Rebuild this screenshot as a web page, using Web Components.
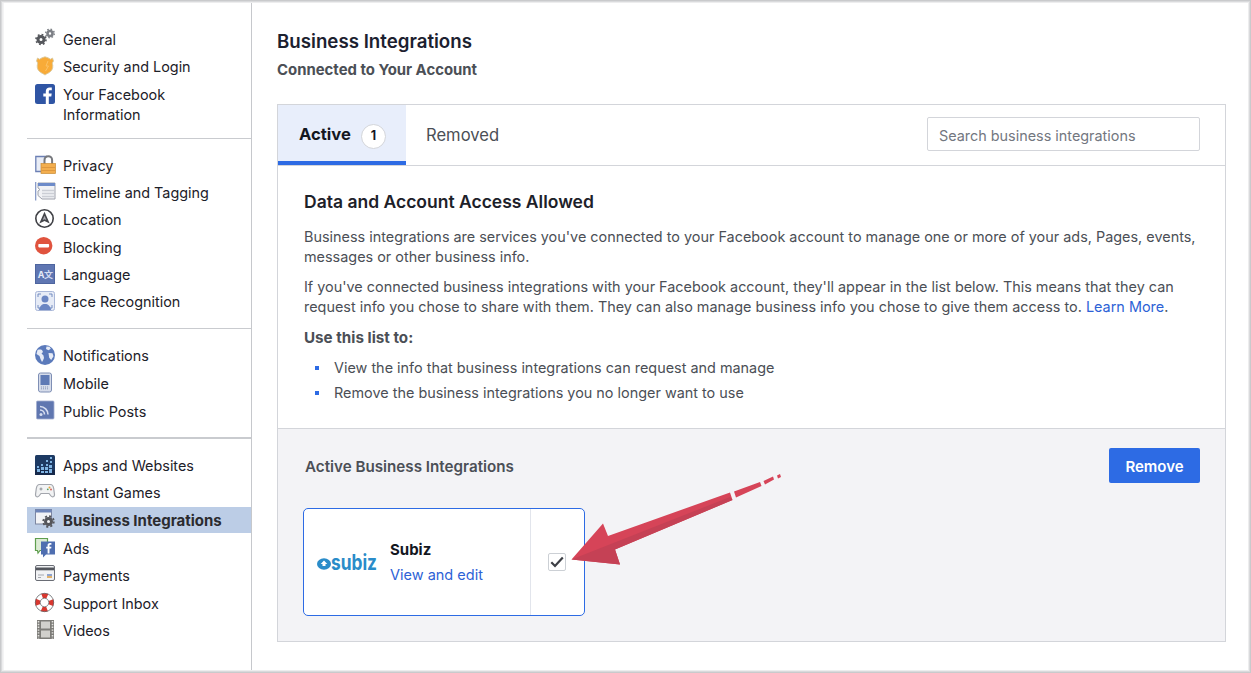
<!DOCTYPE html>
<html>
<head>
<meta charset="utf-8">
<title>Business Integrations</title>
<style>
html, body { margin: 0; padding: 0; background: #fff; }
body { font: 14.4px/20px Inter, "Liberation Sans", sans-serif; color: #1d2129; }
</style>
</head>
<body>
<fb-settings>
    <fb-sidebar slot="side">
        <fb-nav-group style="--row:27.4px; --pb:13.2px">
            <fb-nav-item icon="gears">General</fb-nav-item>
            <fb-nav-item icon="badge">Security and Login</fb-nav-item>
            <fb-nav-item icon="fb">Your Facebook Information</fb-nav-item>
        </fb-nav-group>
        <fb-nav-group style="--row:27.2px; --pb:11.8px">
            <fb-nav-item icon="lock">Privacy</fb-nav-item>
            <fb-nav-item icon="timeline">Timeline and Tagging</fb-nav-item>
            <fb-nav-item icon="location">Location</fb-nav-item>
            <fb-nav-item icon="block">Blocking</fb-nav-item>
            <fb-nav-item icon="language">Language</fb-nav-item>
            <fb-nav-item icon="face">Face Recognition</fb-nav-item>
        </fb-nav-group>
        <fb-nav-group style="--row:28px; --pb:10px; --line:2px">
            <fb-nav-item icon="globe">Notifications</fb-nav-item>
            <fb-nav-item icon="mobile">Mobile</fb-nav-item>
            <fb-nav-item icon="rss">Public Posts</fb-nav-item>
        </fb-nav-group>
        <fb-nav-group last style="--row:27.5px">
            <fb-nav-item icon="apps">Apps and Websites</fb-nav-item>
            <fb-nav-item icon="pad">Instant Games</fb-nav-item>
            <fb-nav-item icon="bizgear" active>Business Integrations</fb-nav-item>
            <fb-nav-item icon="ads">Ads</fb-nav-item>
            <fb-nav-item icon="card">Payments</fb-nav-item>
            <fb-nav-item icon="buoy">Support Inbox</fb-nav-item>
            <fb-nav-item icon="film">Videos</fb-nav-item>
        </fb-nav-group>
    </fb-sidebar>

    <fb-page-title title="Business Integrations" sub="Connected to Your Account"></fb-page-title>

    <fb-panel>
        <fb-tabs slot="tabs" placeholder="Search business integrations"></fb-tabs>
        <fb-info slot="info">
            <h3 slot="title">Data and Account Access Allowed</h3>
        </fb-info>
        <fb-active-list slot="list" title="Active Business Integrations">
            <fb-biz-card name="Subiz" link="View and edit"></fb-biz-card>
        </fb-active-list>
    </fb-panel>

    <fb-arrow slot="over"></fb-arrow>
</fb-settings>

<script>
const ICONS = {
    gears: `<g fill="none"><circle cx="6" cy="10.500" r="3" stroke="#55575c" stroke-width="3"/><circle cx="6" cy="10.500" r="5" stroke="#55575c" stroke-width="1.600" stroke-dasharray="1.800 2.120"/><circle cx="15" cy="4.500" r="2.500" stroke="#7d8086" stroke-width="2.600"/><circle cx="15" cy="4.500" r="4.300" stroke="#7d8086" stroke-width="1.400" stroke-dasharray="1.600 1.780"/></g>`,
    badge: `<path d="M2.500 2l2 1.200L7 1.800l3-1 3 1 2.500 1.400 2-1.200 1 3-1.200 2c1 3.500.5 6-1.300 8-1.800 2-4 2.500-6 4-2-1.500-4.200-2-6-4-1.800-2-2.300-4.500-1.300-8L1.500 5z" fill="#f8ab38" stroke="#d9c9a0" stroke-width=".9"/><path d="M13 5l-2 5h2.500l-3 5" fill="none" stroke="#fcc266" stroke-width="1"/>`,
    fb: `<rect width="20" height="20" rx="2.500" fill="#2f55a4"/><path d="M13.800 20v-7.500h2.500l.4-3h-2.900V7.600c0-.9.3-1.400 1.500-1.400h1.500V3.500c-.3 0-1.200-.1-2.200-.1-2.200 0-3.800 1.300-3.800 3.800v2.300H8.300v3h2.500V20z" fill="#fff"/>`,
    lock: `<path d="M12 1.500H.8v15H6" fill="#e9edf6" stroke="#6c80b5" stroke-width="1.300"/><path d="M9.500 9V5a3.800 3.800 0 0 1 7.600 0v4" fill="none" stroke="#77797e" stroke-width="2"/><rect x="6" y="8.500" width="14.500" height="10" fill="#f3ae4e" stroke="#c98c36" stroke-width=".7"/><path d="M6.500 12.500h13.500M6.500 15.500h13.500" stroke="#d8923a" stroke-width=".8"/>`,
    timeline: `<path d="M.7 0v18.500" stroke="#7f93c2" stroke-width="1.200" fill="none"/><path d="M3 1h17v16H7l-4-3.500V9l2-1.500-2-1.500z" fill="#f1f2f5" stroke="#9ea2ac"/><rect x="3" y="1" width="17" height="3" fill="#6d8bc9"/><path d="M7 8.500h12M7 11.500h12M7 14.500h12" stroke="#cbced5" stroke-width="1.500"/>`,
    location: `<circle cx="9.500" cy="9.500" r="8.700" fill="#fff" stroke="#3f4045" stroke-width="1.600"/><path d="M9.500 2.800l5.200 11.700-5.200-2.600-5.200 2.600z" fill="#44454a"/><path d="M9.500 6.800l1.900 4.200-1.900-.8-1.900.8z" fill="#a9aab0"/>`,
    block: `<circle cx="8.700" cy="8.700" r="8.700" fill="#e0533e"/><rect x="3.300" y="7" width="10.800" height="3.400" rx=".8" fill="#fff"/>`,
    language: `<rect x=".5" y=".5" width="19" height="19" fill="#5f76b2" stroke="#4e659f"/><text x="2.800" y="14" font-size="9" font-weight="700" fill="#e6ebf8" font-family="Inter, sans-serif">A</text><text x="9" y="14" font-size="9" font-weight="700" fill="#d3dcf2" font-family="'Noto Sans CJK SC', sans-serif">文</text>`,
    face: `<rect x=".5" y=".5" width="19" height="19" rx="2" fill="#e6ebf6" stroke="#a9b7d8"/><path d="M3 6V3h3M14 3h3v3M3 14v3h3M14 17h3v-3" fill="none" stroke="#6a83bb" stroke-width=".9"/><circle cx="10" cy="8" r="3.500" fill="#6b86c3"/><path d="M4 19c.4-4 3.300-5.500 4.500-6h3c1.200.5 4.100 2 4.500 6z" fill="#6b86c3"/>`,
    globe: `<circle cx="10" cy="10" r="10" fill="#5b7abb"/><path d="M2.500 5c1.800-.7 3-.5 4.500 0l1 2-1.500 1.500 2 2 .5 2.500L8 15.500 7 17 5.500 14 4.500 11 1.500 9zM11.500 1.500l3 .3 1.300 2-2.300 1.400L11 4zM13.500 8l4 .3 1 3-2.300 3.700-2-2.300z" fill="#e6ebf6"/>`,
    mobile: `<rect x="3.500" y="0" width="13" height="19" rx="2" fill="#d6dcea" stroke="#7f8fb5"/><rect x="5.500" y="2" width="9" height="10" fill="#5f7ab5"/><path d="M6 14h8M6 15.800h8" stroke="#8a97b8" stroke-dasharray="1 1"/>`,
    rss: `<rect x="1.500" y="0" width="17.500" height="18" rx="1" fill="#6077b0" stroke="#a3aed0" stroke-width=".8"/><circle cx="6" cy="13.500" r="1.500" fill="#d7def0"/><path d="M5 9a4.500 4.500 0 0 1 4.500 4.500M5 5.500a8 8 0 0 1 8 8" fill="none" stroke="#d7def0" stroke-width="1.600"/>`,
    apps: `<rect width="20" height="20" rx="1.500" fill="#1d3a63"/><rect y="15" width="20" height="5" fill="#16294a"/><path d="M15 2h2v2h-2zM11 5h2v2h-2zM15 6h2v2h-2zM6 9h2v2H6zM11 9h2v2h-2zM2 11h2v2H2zM6 12h3v3H6zM2 14h3v3H2zM10 12h3v3h-3zM14 10h3v3h-3zM6 16h3v2H6zM10 16h3v2h-3zM14 14h3v4h-3z" fill="#7fb4e4"/>`,
    pad: `<path d="M4.500 2.500h11c2 0 2.800 1.500 3.200 4l.8 6c.3 2.500-2.300 3-3.500 1.500L14 11.500H6L4 14c-1.200 1.500-3.800 1-3.500-1.500l.8-6c.4-2.500 1.200-4 3.200-4z" fill="#f2f3f4" stroke="#a3a6ad" stroke-width="1.200"/><circle cx="14.500" cy="5.500" r="1" fill="#e8a13d"/><circle cx="12.800" cy="7.300" r=".9" fill="#4f9e5c"/><circle cx="16" cy="7.500" r=".9" fill="#d1584e"/><path d="M4.500 7h3M6 5.500v3" stroke="#8b8e95"/>`,
    bizgear: `<rect x=".5" y=".5" width="16" height="14.500" fill="#f2f3f6" stroke="#7d86a0"/><rect x=".5" y=".5" width="16" height="3" fill="#6d84b8"/><circle cx="13.500" cy="12.500" r="3" fill="none" stroke="#55565b" stroke-width="3"/><circle cx="13.500" cy="12.500" r="5.300" fill="none" stroke="#55565b" stroke-width="1.800" stroke-dasharray="2.100 2.060"/>`,
    ads: `<path d="M.5.500h12v12H5L3 15l-.5-2.500h-2z" fill="#dcebd4" stroke="#5f9e4e" stroke-width="1.200"/><path d="M6 3.500h14v13h-9l-3 3v-3H6z" fill="#4f6eb0"/><path d="M14.500 15.500v-5h1.700l.2-1.800h-1.900V7.500c0-.5.2-.8.9-.8h1V5.100h-1.500c-1.500 0-2.300.9-2.300 2.300v1.300h-1.400v1.800h1.400v5z" fill="#fff"/>`,
    card: `<rect x=".5" y=".5" width="19" height="15" rx="1.500" fill="#f1f2f4" stroke="#6a6d75"/><rect x="1" y="2.500" width="18" height="2.800" fill="#53565d"/><path d="M3 10h6M3 12.500h3" stroke="#a6a9b0"/><rect x="12" y="9" width="5" height="2" fill="#8ea3cf"/><rect x="12" y="11" width="5" height="2" fill="#e2b26a"/>`,
    buoy: `<circle cx="9.500" cy="9.500" r="6.800" fill="none" stroke="#fff" stroke-width="5"/><circle cx="9.500" cy="9.500" r="6.800" fill="none" stroke="#d9372f" stroke-width="5" stroke-dasharray="5.300 5.380" stroke-dashoffset="2.600"/><circle cx="9.500" cy="9.500" r="9.200" fill="none" stroke="#55575c" stroke-width=".7"/><circle cx="9.500" cy="9.500" r="4.300" fill="#fff" stroke="#55575c" stroke-width=".7"/>`,
    film: `<rect x="2" y="0" width="17" height="19" fill="#7d7c78"/><rect x="6" y="1.500" width="9" height="7" fill="#d1d0cc"/><rect x="6" y="10.500" width="9" height="7" fill="#d1d0cc"/><path d="M3.500 1v17.500M17.500 1v17.500" stroke="#e4e3e0" stroke-width="1.600" stroke-dasharray="1.400 1.400"/>`
};

customElements.define('fb-settings', class extends HTMLElement {
    constructor() {
        super();
        this.attachShadow({ mode: 'open' }).innerHTML = `
        <style>
        :host {
            display: block;
            position: relative;
            width: 1251px;
            height: 673px;
            overflow: hidden;
            box-sizing: border-box;
        }
        .frame {
            display: flex;
            height: 100%;
        }
        .main {
            flex: 1;
            padding: 30px 25px 0 25px;
        }
        .edge {
            position: absolute;
            inset: 0;
            pointer-events: none;
            box-shadow: inset 0 0 0 1px #c9cacc, inset 0 0 0 2px #d9dadc, inset 0 0 0 3px #ededee, inset 2px 0 0 2px #f4f4f5;
        }
        </style>
        <div class="frame">
            <slot name="side"></slot>
            <div class="main"><slot></slot></div>
        </div>
        <slot name="over"></slot>
        <div class="edge"></div>
        `;
    }
});

customElements.define('fb-sidebar', class extends HTMLElement {
    constructor() {
        super();
        this.attachShadow({ mode: 'open' }).innerHTML = `
        <style>
        :host {
            display: block;
            box-sizing: border-box;
            flex: none;
            width: 252px;
            padding: 27px 0 0 27px;
            border-right: 1px solid #c6c8cc;
        }
        </style>
        <slot></slot>
        `;
    }
});

customElements.define('fb-nav-group', class extends HTMLElement {
    constructor() {
        super();
        this.attachShadow({ mode: 'open' }).innerHTML = `
        <style>
        :host {
            display: block;
            padding-bottom: var(--pb, 0);
            margin-bottom: 14px;
            border-bottom: var(--line, 1px) solid #c9cbcf;
        }
        :host([last]) {
            border-bottom: 0;
        }
        </style>
        <slot></slot>
        `;
    }
});

customElements.define('fb-nav-item', class extends HTMLElement {
    constructor() {
        super();
        const icon = ICONS[this.getAttribute('icon')] || '';
        this.attachShadow({ mode: 'open' }).innerHTML = `
        <style>
        :host {
            display: flex;
            align-items: flex-start;
            box-sizing: border-box;
            min-height: var(--row, 27.2px);
            padding: 3px 20px 0 8px;
            font-size: 14.4px;
            line-height: 20px;
            color: #1d2129;
        }
        :host([active]) {
            min-height: 26px;
            margin: -1px 0 3px;
            padding-top: 4px;
            background: #bccde6;
            font-size: 15px;
            font-weight: 700;
            color: #2b2b2f;
        }
        svg {
            flex: none;
            width: 20px;
            height: 20px;
            margin: -1px 8px 0 0;
            overflow: visible;
        }
        :host([active]) svg {
            margin-top: -2px;
        }
        </style>
        <svg viewBox="0 0 20 20">${icon}</svg>
        <span><slot></slot></span>
        `;
    }
});

customElements.define('fb-page-title', class extends HTMLElement {
    constructor() {
        super();
        this.attachShadow({ mode: 'open' }).innerHTML = `
        <style>
        :host {
            display: block;
            height: 74px;
        }
        h1 {
            margin: 0;
            font-size: 18.7px;
            line-height: 24px;
            font-weight: 600;
            color: #1c2130;
        }
        h2 {
            margin: 6px 0 0;
            font-size: 14.9px;
            line-height: 20px;
            font-weight: 700;
            color: #4b4f56;
        }
        </style>
        <h1>${this.getAttribute('title')}</h1>
        <h2>${this.getAttribute('sub')}</h2>
        `;
    }
});

customElements.define('fb-panel', class extends HTMLElement {
    constructor() {
        super();
        this.attachShadow({ mode: 'open' }).innerHTML = `
        <style>
        :host {
            display: block;
            width: 949px;
            height: 538px;
            box-sizing: border-box;
            border: 1px solid #d3d5da;
        }
        .main {
            display: flex;
            flex-direction: column;
            height: 100%;
        }
        </style>
        <div class="main">
            <slot name="tabs"></slot>
            <slot name="info"></slot>
            <slot name="list"></slot>
        </div>
        `;
    }
});

customElements.define('fb-tabs', class extends HTMLElement {
    constructor() {
        super();
        this.attachShadow({ mode: 'open' }).innerHTML = `
        <style>
        :host {
            display: flex;
            align-items: stretch;
            flex: none;
            height: 61px;
            box-sizing: border-box;
            border-bottom: 1px solid #d3d5da;
        }
        .tab {
            display: flex;
            align-items: center;
            box-sizing: border-box;
            height: 60px;
            font-size: 16.6px;
        }
        .active {
            width: 128px;
            padding: 2px 0 0 21px;
            background: #e8eefb;
            border-bottom: 4px solid #2d6be4;
            font-weight: 700;
            color: #14171f;
        }
        .other {
            padding: 0 0 1px 20px;
            font-weight: 400;
            color: #4b4f56;
        }
        .count {
            display: inline-flex;
            align-items: center;
            justify-content: center;
            width: 25px;
            height: 25px;
            margin: 4px 0 0 10px;
            box-sizing: border-box;
            border: 1px solid #d3d5da;
            border-radius: 50%;
            background: #fff;
            font-size: 12.500px;
            font-weight: 700;
        }
        input {
            width: 273px;
            height: 34px;
            box-sizing: border-box;
            margin: 12px 25px 0 auto;
            padding: 2px 11px 0;
            border: 1px solid #d3d5da;
            border-radius: 2px;
            font: 14.4px Inter, "Liberation Sans", sans-serif;
            outline: none;
        }
        input::placeholder {
            color: #73777f;
            opacity: 1;
        }
        </style>
        <div class="tab active">Active<span class="count">1</span></div>
        <div class="tab other">Removed</div>
        <input placeholder="${this.getAttribute('placeholder')}">
        `;
    }
});

customElements.define('fb-info', class extends HTMLElement {
    constructor() {
        super();
        this.attachShadow({ mode: 'open' }).innerHTML = `
        <style>
        :host {
            display: block;
            flex: none;
            height: 262px;
            box-sizing: border-box;
            padding: 25px 26px 0;
            color: #4b4f56;
            font-size: 14.42px;
            line-height: 20px;
        }
        ::slotted(h3) {
            margin: 0 0 14px;
            font-size: 17.5px;
            line-height: 22px;
            font-weight: 600;
            color: #1d2129;
        }
        p {
            margin: 0 0 10px;
        }
        a {
            color: #2d62d6;
            text-decoration: none;
        }
        b {
            display: block;
            margin-top: 11px;
            font-size: 15.2px;
        }
        ul {
            margin: 10px 0 0;
            padding: 0;
            list-style: none;
        }
        li {
            position: relative;
            padding-left: 30px;
            margin-bottom: 5px;
        }
        li::before {
            content: "";
            position: absolute;
            left: 11px;
            top: 8px;
            width: 4px;
            height: 4px;
            background: #2d6be4;
        }
        </style>
        <slot name="title"></slot>
        <p>Business integrations are services you've connected to your Facebook account to manage one or more of your ads, Pages, events, messages or other business info.</p>
        <p>If you've connected business integrations with your Facebook account, they'll appear in the list below. This means that they can request info you chose to share with them. They can also manage business info you chose to give them access to. <a>Learn More</a>.</p>
        <b>Use this list to:</b>
        <ul>
            <li>View the info that business integrations can request and manage</li>
            <li>Remove the business integrations you no longer want to use</li>
        </ul>
        `;
    }
});

customElements.define('fb-active-list', class extends HTMLElement {
    constructor() {
        super();
        this.attachShadow({ mode: 'open' }).innerHTML = `
        <style>
        :host {
            display: block;
            flex: 1;
            box-sizing: border-box;
            background: #f3f3f6;
            border-top: 1px solid #d3d5da;
            padding: 19px 25px 0 25px;
        }
        .head {
            display: flex;
            align-items: center;
            justify-content: space-between;
            height: 35px;
            margin-bottom: 25px;
        }
        .title {
            padding: 2px 0 0 2px;
            font-size: 15.200px;
            font-weight: 600;
            color: #4b4f56;
        }
        button {
            width: 91px;
            height: 35px;
            padding: 1px 0 0;
            border: 0;
            border-radius: 2px;
            background: #2d6be4;
            color: #fff;
            font: 600 15px Inter, "Liberation Sans", sans-serif;
        }
        </style>
        <div class="head">
            <span class="title">${this.getAttribute('title')}</span>
            <button>Remove</button>
        </div>
        <slot></slot>
        `;
    }
});

customElements.define('fb-biz-card', class extends HTMLElement {
    constructor() {
        super();
        this.attachShadow({ mode: 'open' }).innerHTML = `
        <style>
        :host {
            display: flex;
            width: 282px;
            height: 108px;
            box-sizing: border-box;
            border: 1px solid #2d6be4;
            border-radius: 5px;
            background: #fff;
        }
        .logo {
            flex: none;
            width: 86px;
            display: flex;
            align-items: center;
            padding-left: 13px;
            box-sizing: border-box;
        }
        .logo svg {
            width: 60px;
            height: 18px;
            overflow: visible;
        }
        .text {
            flex: 1;
            padding-top: 31px;
        }
        .name {
            font-size: 15px;
            font-weight: 700;
            color: #14171f;
        }
        .link {
            margin-top: 5px;
            font-size: 14.5px;
            color: #2d62d6;
        }
        .check {
            flex: none;
            width: 54px;
            display: flex;
            align-items: center;
            justify-content: center;
            box-sizing: border-box;
            padding-right: 2px;
            border-left: 1px solid #e2e5ec;
        }
        .box {
            width: 18px;
            height: 18px;
            box-sizing: border-box;
            border: 1px solid #ccd0d5;
            border-radius: 2px;
            display: flex;
            align-items: center;
            justify-content: center;
        }
        </style>
        <div class="logo">
            <svg viewBox="0 0 60 18">
                <ellipse cx="7" cy="11" rx="7" ry="5.800" fill="#2a8cc9"/>
                <path d="M7 7.500l3.300 3.500H8.500v2h-3v-2H3.700z" fill="#fff"/>
                <text x="14" y="16.500" font-size="21" font-weight="700" fill="#2a8cc9" font-family="Inter, sans-serif" textLength="46" lengthAdjust="spacingAndGlyphs">subiz</text>
            </svg>
        </div>
        <div class="text">
            <div class="name">${this.getAttribute('name')}</div>
            <div class="link">${this.getAttribute('link')}</div>
        </div>
        <div class="check">
            <div class="box">
                <svg width="14" height="12" viewBox="0 0 14 12"><path d="M1.300 6.300l3.700 3.700L12.800 1.500" fill="none" stroke="#3d3f45" stroke-width="2.200"/></svg>
            </div>
        </div>
        `;
    }
});

customElements.define('fb-arrow', class extends HTMLElement {
    constructor() {
        super();
        this.attachShadow({ mode: 'open' }).innerHTML = `
        <style>
        :host {
            display: block;
            position: absolute;
            left: 560px;
            top: 465px;
            width: 230px;
            height: 110px;
        }
        svg {
            display: block;
        }
        </style>
        <svg width="230" height="110" viewBox="560 465 230 110">
            <path d="M571.500 559.500L603 523.500 608 536 730 492.500 732.500 500 615 549.500 620 564.500z" fill="#d64458"/>
            <path d="M571.500 559.500L730 497 732.500 500 615 549.500 620 564.500z" fill="#c54155"/>
            <path d="M734 491.500L760 482 761.500 486 736 497.500zM763.500 481L773 476.500 774 479.500 765 484.500zM777 475.500L780 474 781 477 778 478.500z" fill="#d64458"/>
        </svg>
        `;
    }
});
</script>
</body>
</html>
